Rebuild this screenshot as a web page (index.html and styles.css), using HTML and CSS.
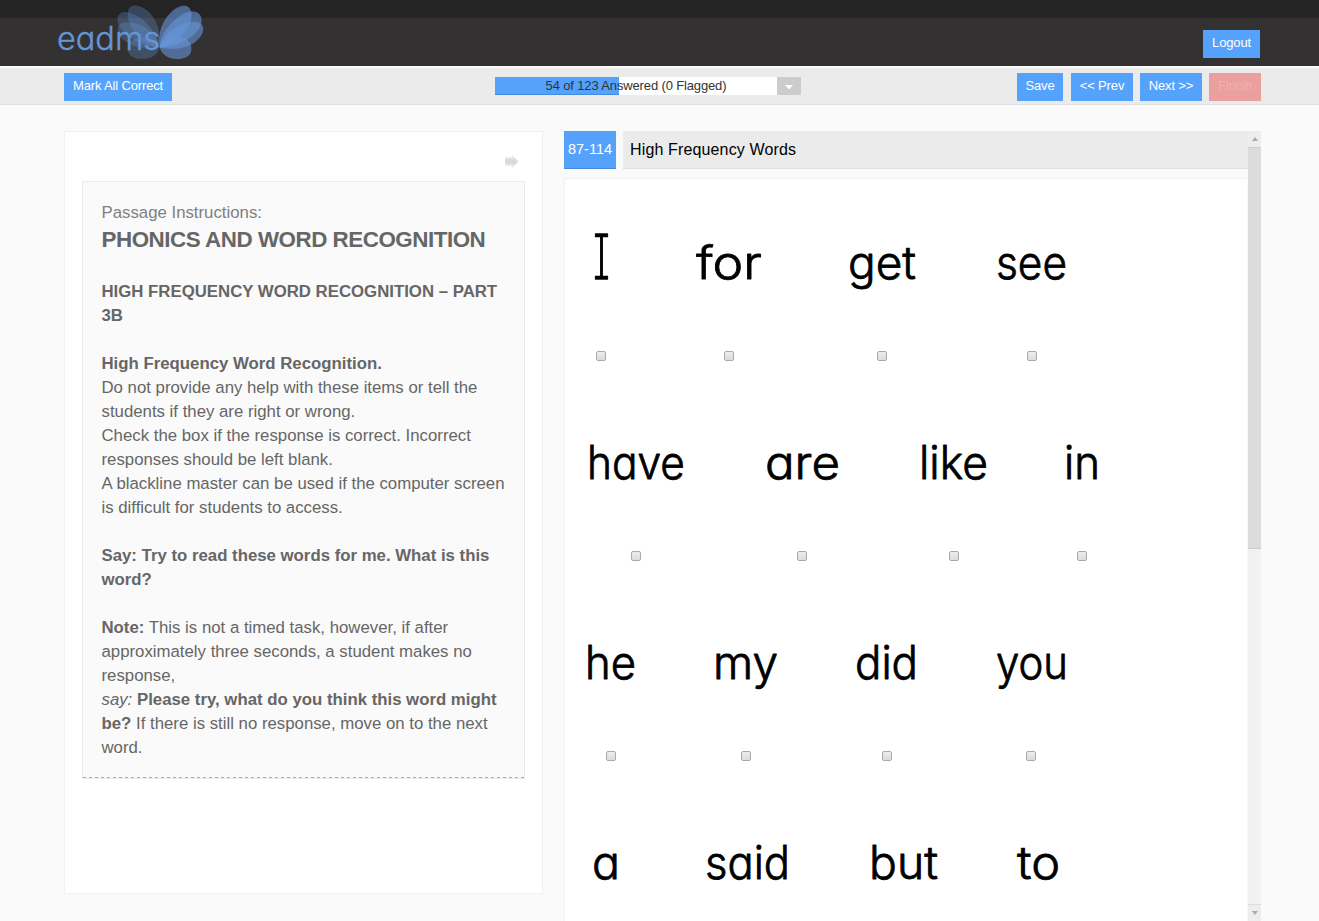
FILE: index.html
```html
<!DOCTYPE html>
<html lang="en">
<head>
<meta charset="utf-8">
<title>eadms</title>
<link rel="stylesheet" href="styles.css">
</head>
<body>
<header class="header">
  <svg class="logo" width="160" height="60" viewBox="0 0 160 60" aria-label="eadms">
    <g transform="translate(-4 0) scale(.33333)" fill="#6596d8" stroke="#6ea1e5" stroke-width="1.5">
      <g fill-opacity=".3" stroke-opacity=".18">
        <path d="M357 142C310 135 264 90 264 42C264 5 304 15 326 36C352 62 362 100 357 142Z"/>
        <path d="M357 142C300 139 232 98 233 58C235 25 275 35 305 58C335 82 352 112 357 142Z"/>
        <path d="M357 142C295 152 240 125 234 93C230 62 270 64 300 76C332 91 352 115 357 142Z"/>
        <path d="M357 142C355 168 326 178 300 176C273 174 260 158 264 141C270 118 300 110 325 118C340 122 351 131 357 142Z"/>
      </g>
      <g fill-opacity=".6" stroke-opacity=".5">
        <path d="M360 142C352 100 370 60 394 37C418 12 452 9 454 42C454 94 400 132 360 142Z"/>
        <path d="M360 142C360 105 388 72 418 50C450 28 482 29 484 60C484 100 425 138 360 142Z"/>
        <path d="M360 142C366 112 396 85 428 74C463 60 490 66 489 88C484 130 425 156 360 142Z"/>
        <path d="M360 142C371 115 399 107 430 115C451 121 458 144 450 161C434 184 370 184 360 142Z"/>
      </g>
    </g>
    <text class="logo-text" x="13" y="50" textLength="103" lengthAdjust="spacingAndGlyphs">eadms</text>
  </svg>
  <button class="btn logout">Logout</button>
</header>
<nav class="toolbar">
  <button class="btn mark">Mark All Correct</button>
  <div class="progress">
    <div class="meter"><span>54 of 123 Answered (0 Flagged)</span></div>
    <div class="drop"><svg width="8" height="5"><path d="M0 0H8L4 4.5Z" fill="#fff"/></svg></div>
  </div>
  <div class="actions">
    <button class="btn save">Save</button>
    <button class="btn step">&lt;&lt; Prev</button>
    <button class="btn step">Next &gt;&gt;</button>
    <button class="btn finish">Finish</button>
  </div>
</nav>
<main class="main">
  <section class="passage">
    <svg class="arrow" width="14" height="13"><path d="M0 2H7V0L14 6.5L7 13V11H0Z" fill="#ebebeb"/><path d="M0 4H8V2L12.5 6.5L8 11V9H0Z" fill="#d9d9d9"/></svg>
    <div class="box">
      <div class="text">
        <div class="label">Passage Instructions:</div>
        <h1 class="title">PHONICS AND WORD RECOGNITION</h1>
        <p><b>HIGH FREQUENCY WORD RECOGNITION – PART<br>3B</b></p>
        <p><b>High Frequency Word Recognition.</b><br>Do not provide any help with these items or tell the<br>students if they are right or wrong.<br>Check the box if the response is correct. Incorrect<br>responses should be left blank.<br>A blackline master can be used if the computer screen<br>is difficult for students to access.</p>
        <p><b>Say: Try to read these words for me. What is this<br>word?</b></p>
        <p><b>Note:</b> This is not a timed task, however, if after<br>approximately three seconds, a student makes no<br>response,<br><i>say:</i> <b>Please try, what do you think this word might<br>be?</b> If there is still no response, move on to the next<br>word.</p>
      </div>
    </div>
  </section>
  <section class="question">
    <div class="content">
      <div class="heading"><div class="number">87-114</div><h2 class="name">High Frequency Words</h2></div>
      <div class="words">
        <div class="row r1">
          <label class="cell"><svg class="word" width="17" height="80"><text class="cap" x="0" y="50" textLength="17" lengthAdjust="spacingAndGlyphs">I</text></svg><span class="check"></span></label>
          <label class="cell"><svg class="word" width="66" height="80"><text x="0" y="50" textLength="66" lengthAdjust="spacingAndGlyphs">for</text></svg><span class="check"></span></label>
          <label class="cell"><svg class="word" width="68" height="80"><text x="0" y="50" textLength="68" lengthAdjust="spacingAndGlyphs">get</text></svg><span class="check"></span></label>
          <label class="cell"><svg class="word" width="71" height="80"><text x="-1" y="50" textLength="71" lengthAdjust="spacingAndGlyphs">see</text></svg><span class="check"></span></label>
        </div>
        <div class="row r2">
          <label class="cell"><svg class="word" width="100" height="80"><text x="1" y="50" textLength="98" lengthAdjust="spacingAndGlyphs">have</text></svg><span class="check"></span></label>
          <label class="cell"><svg class="word" width="75" height="80"><text x="0" y="50" textLength="75" lengthAdjust="spacingAndGlyphs">are</text></svg><span class="check"></span></label>
          <label class="cell"><svg class="word" width="70" height="80"><text x="0" y="50" textLength="69" lengthAdjust="spacingAndGlyphs">like</text></svg><span class="check"></span></label>
          <label class="cell"><svg class="word" width="37" height="80"><text x="0" y="50" textLength="36" lengthAdjust="spacingAndGlyphs">in</text></svg><span class="check"></span></label>
        </div>
        <div class="row r3">
          <label class="cell"><svg class="word" width="52" height="80"><text x="0" y="50" textLength="51" lengthAdjust="spacingAndGlyphs">he</text></svg><span class="check"></span></label>
          <label class="cell"><svg class="word" width="66" height="80"><text x="0" y="50" textLength="65" lengthAdjust="spacingAndGlyphs">my</text></svg><span class="check"></span></label>
          <label class="cell"><svg class="word" width="64" height="80"><text x="0" y="50" textLength="63" lengthAdjust="spacingAndGlyphs">did</text></svg><span class="check"></span></label>
          <label class="cell"><svg class="word" width="73" height="80"><text x="1" y="50" textLength="72" lengthAdjust="spacingAndGlyphs">you</text></svg><span class="check"></span></label>
        </div>
        <div class="row r4">
          <label class="cell"><svg class="word" width="29" height="80"><text x="0" y="50" textLength="28" lengthAdjust="spacingAndGlyphs">a</text></svg></label>
          <label class="cell"><svg class="word" width="86" height="80"><text x="0" y="50" textLength="85" lengthAdjust="spacingAndGlyphs">said</text></svg></label>
          <label class="cell"><svg class="word" width="70" height="80"><text x="0" y="50" textLength="69" lengthAdjust="spacingAndGlyphs">but</text></svg></label>
          <label class="cell"><svg class="word" width="43" height="80"><text x="0" y="50" textLength="43" lengthAdjust="spacingAndGlyphs">to</text></svg></label>
        </div>
      </div>
    </div>
    <div class="scrollbar">
      <div class="sb-btn"><svg width="6" height="4"><path d="M0 4L3 0L6 4Z" fill="#aaa"/></svg></div>
      <div class="thumb"></div>
      <div class="sb-btn down"><svg width="6" height="4"><path d="M0 0H6L3 4Z" fill="#aaa"/></svg></div>
    </div>
  </section>
</main>
</body>
</html>
```
FILE: styles.css
```css
* { box-sizing: border-box; }
body { margin: 0; height: 921px; overflow: hidden; background: #fafafa; font-family: "Liberation Sans", Arial, sans-serif; }
svg { display: block; }
.header { height: 66px; border-top: 18px solid #242424; background: #343132; display: flex; justify-content: space-between; padding: 0 59px 0 44px; }
.logo { margin-top: -18px; overflow: visible; }
.logo-text { font: 300 32px Inter, sans-serif; font-feature-settings: "cv11"; fill: #6596d8; stroke: #6596d8; stroke-width: .4px; }
.btn { border: 0; height: 28px; padding: 0 0 3px; background: #55a2fc; color: #fff; font: 13px "Liberation Sans", Arial, sans-serif; letter-spacing: -.15px; white-space: nowrap; }
.logout { width: 57px; margin-top: 12px; }
.toolbar { height: 39px; border-top: 2px solid #fafafa; border-bottom: 1px solid #dedede; background: #ebebeb; display: flex; align-items: flex-start; padding: 5px 58px 0 64px; }
.mark { width: 108px; }
.progress { display: flex; margin: 4px 0 0 323px; height: 18px; }
.meter { width: 282px; text-align: center; font-size: 13px; line-height: 17px; color: #333; background: linear-gradient(to right, transparent 124px, #fff 124px), linear-gradient(#55a2fc 17px, #428bdd 17px); letter-spacing: -.14px; }
.drop { width: 24px; background: #ccc; display: flex; align-items: center; justify-content: center; padding-top: 2px; }
.actions { display: flex; margin-left: auto; }
.save { width: 46px; margin-right: 8px; }
.step { width: 62px; margin-right: 7px; }
.finish { width: 52px; background: #eba0a0; color: #f1b0b0; }
.main { display: flex; height: 816px; padding: 26px 58px 0 64px; }
.passage { width: 479px; height: 763px; background: #fff; border: 1px solid #f0f0f0; padding: 23px 17px 0; }
.arrow { margin: 0 6px 13px auto; }
.box { border: 1px solid #ebebeb; background: #fafafa; height: 598px; }
.text { height: 596px; background: repeating-linear-gradient(to right, #aaa 0 3px, transparent 3px 6px) bottom / 100% 1px no-repeat; padding: 19px 18px 0 18.5px; color: #666; font-size: 16.8px; line-height: 24px; white-space: nowrap; }
.text p { margin: 0 0 24px; }
.label { color: #808080; }
.title { margin: 0 0 26px; font-size: 22.4px; line-height: 29px; letter-spacing: -.48px; }
.question { display: flex; width: 697px; margin-left: 21px; }
.content { width: 684px; }
.heading { display: flex; gap: 7px; height: 38px; }
.number { width: 52px; background: #55a2fc; border-bottom: 1px solid #428bdd; color: #fff; text-align: center; font-size: 14.5px; line-height: 36px; }
.name { flex: 1; margin: 0; padding-left: 7px; background: #ebebeb; border-bottom: 1px solid #dedede; color: #000; font-size: 16px; font-weight: 400; line-height: 37px; letter-spacing: .14px; }
.words { height: 744px; margin-top: 9px; margin-right: 1px; padding-top: 50px; background: #fff; border: 1px solid #f0f0f0; border-right: 0; overflow: hidden; }
.row { display: grid; height: 200px; }
.r1 { grid-template-columns: 72px 184px 122px 178px; }
.r2 { grid-template-columns: 142px 190px 114px 142px; }
.r3 { grid-template-columns: 92px 178px 104px 184px; }
.r4 { grid-template-columns: 82px 202px 110px 158px; }
.cell { display: flex; flex-direction: column; align-items: center; }
.word { overflow: visible; font: 300 46px Inter, sans-serif; font-feature-settings: "cv11", "cv08"; fill: #000; stroke: #000; stroke-width: .8px; stroke-linejoin: round; }
.cap { font-size: 62px; font-weight: 200; stroke-width: 1.3px; }
.check { width: 10px; height: 10px; margin-top: 42px; border: 1px solid #aaa; border-radius: 2px; background: linear-gradient(#ededed, #dcdcdc); }
.scrollbar { width: 13px; height: 790px; background: #f1f1f1; display: flex; flex-direction: column; }
.sb-btn { height: 17px; background: #ededed; border-bottom: 1px solid #ccc; display: flex; align-items: center; justify-content: center; }
.thumb { height: 401px; background: #dcdcdc; border-bottom: 1px solid #ccc; }
.down { margin-top: auto; border-bottom: 0; border-top: 1px solid #ddd; }
```
